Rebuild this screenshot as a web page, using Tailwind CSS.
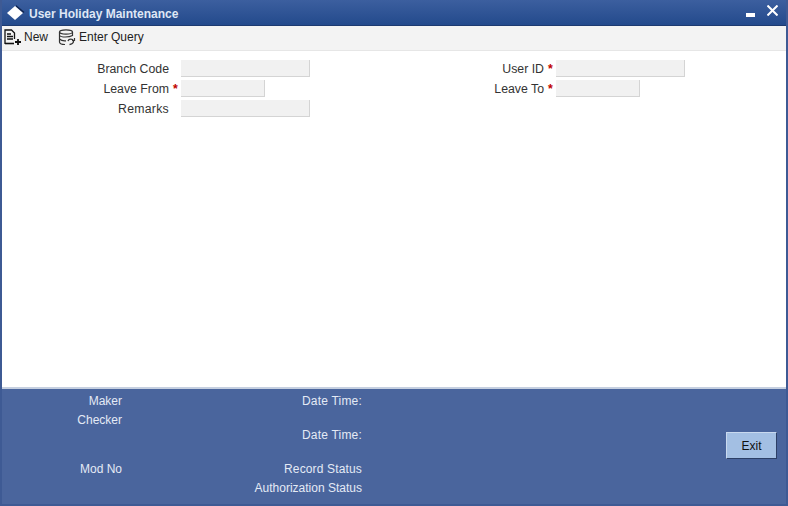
<!DOCTYPE html>
<html lang="en">
<head>
  <meta charset="UTF-8" />
  <title>User Holiday Maintenance</title>
  <script src="https://cdn.jsdelivr.net/npm/@tailwindcss/browser@4"></script>
</head>
<body class="bg-white font-['Liberation_Sans',Arial,sans-serif] text-[12.3px] text-[#333]">
  <div class="w-[788px] h-[506px] flex flex-col border-x-2 border-b-[2px] border-[#3e5a94] overflow-hidden">
    <!-- Title bar -->
    <header class="h-[26px] shrink-0 -mx-[2px] relative flex items-center pt-[3px] pl-[29px] border-b border-[#1d3a70] bg-gradient-to-b from-[#3c5f9f] to-[#234a8c]">
      <svg width="18" height="16" viewBox="0 0 18 16" class="absolute left-[7px] top-[5px]"><path d="M9 0 L17.5 7 L16 8 L9 2 Z" fill="#0f2450"/><path d="M8 1 L16 8 L8 15 L0 8 Z" fill="#fff"/></svg>
      <h1 class="text-[12px] font-bold text-[#dfe7f5]">User Holiday Maintenance</h1>
      <!-- window buttons -->
      <svg width="9" height="4" viewBox="0 0 9 4" class="absolute left-[746px] top-[13px]"><rect width="9" height="4" fill="#fff"/></svg>
      <svg width="11" height="11" viewBox="0 0 11 11" class="absolute left-[767px] top-[5px]"><path d="M0.5 0.5 L10.5 10.5 M10.5 0.5 L0.5 10.5" stroke="#fff" stroke-width="2"/></svg>
    </header>

    <!-- Toolbar -->
    <div class="h-[25px] shrink-0 flex items-center pl-[2px] pb-[2px] bg-[#f3f3f3] border-b border-[#e6e6e6] text-[12px] text-[#222]">
      <button class="flex items-center gap-[2px] mr-[10px]">
        <svg width="18" height="16" viewBox="0 0 18 16" fill="none" stroke="#111" stroke-width="1.3"><path d="M1 15 V1 H7.5 L10.5 4 V10"/><path d="M3 5 H7 M3 7.5 H9 M3 10 H9"/><path d="M1 14.5 H10" stroke-width="1.6"/><path d="M14 10 V16 M11 13 H17" stroke-width="1.8"/></svg>
        New
      </button>
      <button class="flex items-center gap-[3px]">
        <svg width="18" height="17" viewBox="0 0 18 17" fill="none" stroke="#333" stroke-width="1.2"><ellipse cx="8" cy="3" rx="6.5" ry="2.2"/><path d="M1.5 3 V13 C1.5 14.5 4 15.5 7 15.5"/><path d="M14.5 3 V7"/><path d="M1.5 6.5 C3 8.5 11 8.5 14.5 6.5 M1.5 10 C3 11.5 6 12 8 11.8"/><path d="M10 12 C11 9.5 14.5 9.5 15.5 12 C15.5 14 13.5 15.5 11.5 15.5" stroke-width="1.4"/><path d="M14 11.5 H16.5 V9" stroke-width="1.2"/></svg>
        Enter Query
      </button>
    </div>

    <!-- Form -->
    <main class="flex-1 grid grid-cols-[375px_1fr] auto-rows-[17px] gap-y-[3px] content-start bg-white pt-[9px]">
      <div class="flex items-center">
        <label class="w-[167px] pt-[2px] text-right">Branch Code</label>
        <span class="w-[12px]"></span>
        <input class="w-[129px] h-[17px] bg-[#f1f1f1] border-b border-r border-[#d4d4d4]" />
      </div>
      <div class="flex items-center">
        <label class="w-[167px] pt-[2px] text-right">User ID</label>
        <span class="w-[12px] pt-[2px] pl-[4px] text-[#c00000] font-bold">*</span>
        <input class="w-[129px] h-[17px] bg-[#f1f1f1] border-b border-r border-[#d4d4d4]" />
      </div>
      <div class="flex items-center">
        <label class="w-[167px] pt-[2px] text-right">Leave From</label>
        <span class="w-[12px] pt-[2px] pl-[4px] text-[#c00000] font-bold">*</span>
        <input class="w-[84px] h-[17px] bg-[#f1f1f1] border-b border-r border-[#d4d4d4]" />
      </div>
      <div class="flex items-center">
        <label class="w-[167px] pt-[2px] text-right">Leave To</label>
        <span class="w-[12px] pt-[2px] pl-[4px] text-[#c00000] font-bold">*</span>
        <input class="w-[84px] h-[17px] bg-[#f1f1f1] border-b border-r border-[#d4d4d4]" />
      </div>
      <div class="flex items-center">
        <label class="w-[167px] pt-[2px] text-right tracking-[0.25px]">Remarks</label>
        <span class="w-[12px]"></span>
        <input class="w-[129px] h-[17px] bg-[#f1f1f1] border-b border-r border-[#d4d4d4]" />
      </div>
    </main>

    <!-- Footer -->
    <footer class="h-[117px] shrink-0 flex bg-[#4a659d] border-t-2 border-[#c5cfe0] text-[#e4eaf5] text-[12px]">
      <div class="w-[120px] flex flex-col items-end pt-[5px] leading-[14px]">
        <span>Maker</span>
        <span class="mt-[5px]">Checker</span>
        <span class="mt-[35px]">Mod No</span>
      </div>
      <div class="w-[240px] flex flex-col items-end pt-[5px] leading-[14px]">
        <span class="tracking-[0.2px]">Date Time:</span>
        <span class="mt-[20px] tracking-[0.2px]">Date Time:</span>
        <span class="mt-[20px] tracking-[0.15px]">Record Status</span>
        <span class="mt-[5px]">Authorization Status</span>
      </div>
      <div class="flex-1 flex justify-end items-start pt-[43px] pr-[9px]">
        <button class="w-[51px] h-[27px] bg-[#a3bfe3] border border-t-[#c9d9ef] border-l-[#c9d9ef] border-r-[#2c3f66] border-b-[#2c3f66] text-[12px] font-medium text-[#111]">Exit</button>
      </div>
    </footer>
  </div>
</body>
</html>
